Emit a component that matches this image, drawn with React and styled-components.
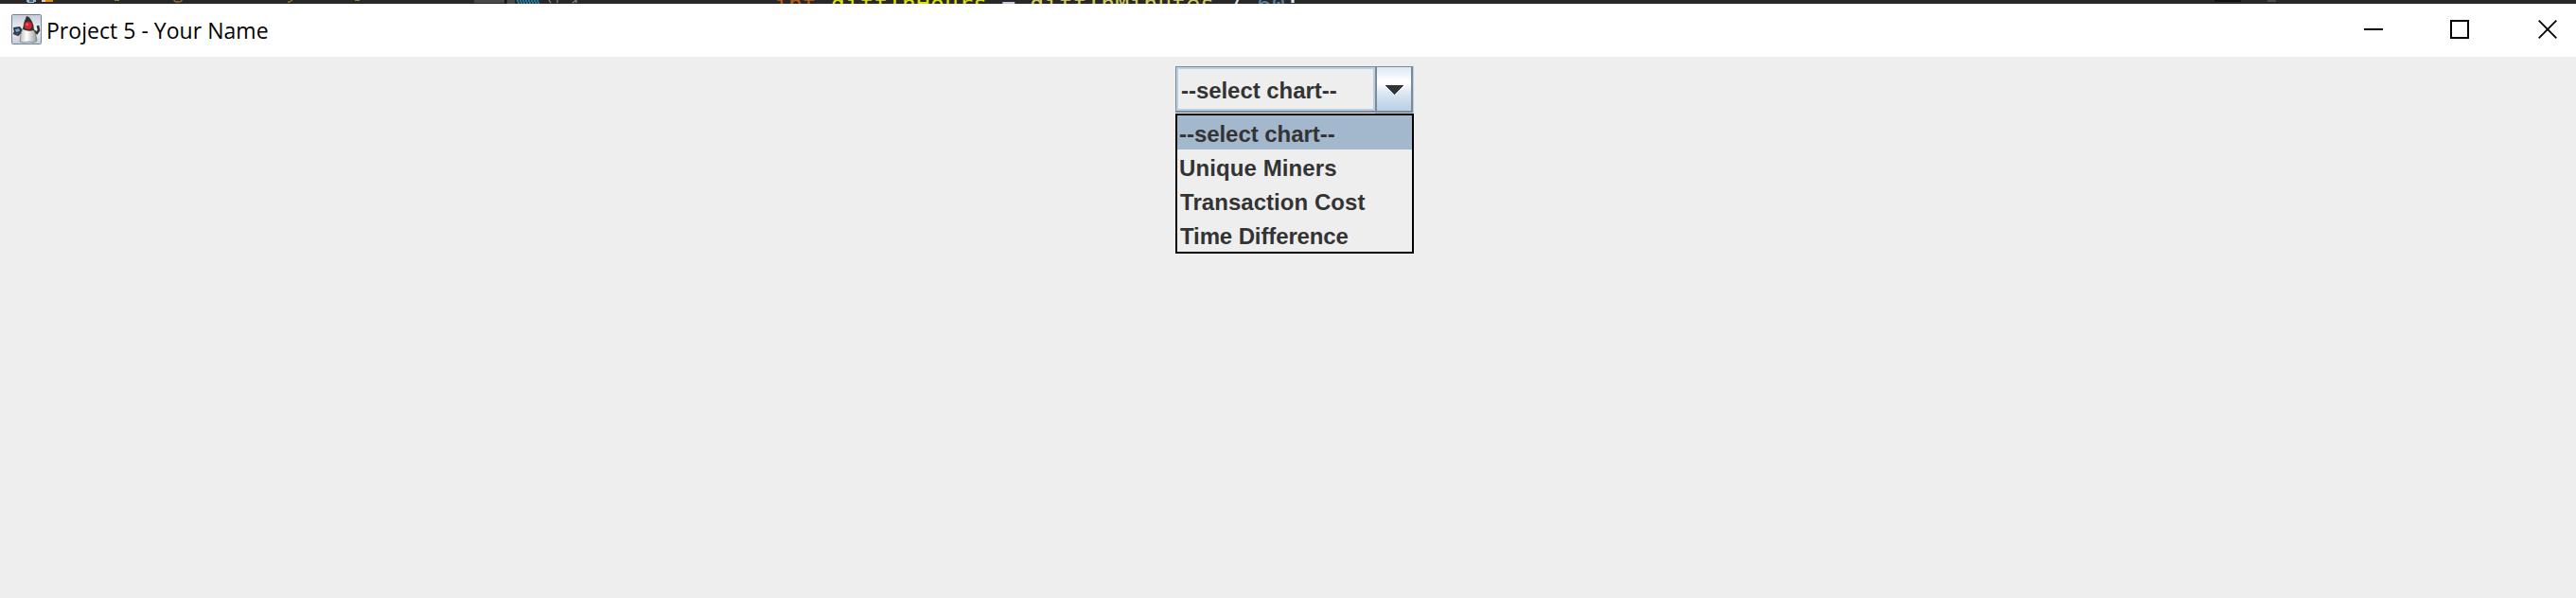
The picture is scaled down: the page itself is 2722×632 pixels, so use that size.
import React from "react";
import styled, { createGlobalStyle } from "styled-components";

const GlobalStyle = createGlobalStyle`
  * { box-sizing: border-box; }
  body { margin: 0; background: #eee; overflow: hidden; }
`;

const Screen = styled.div`
  display: flex;
  flex-direction: column;
  width: 2722px;
  height: 632px;
  background: #eee;
  font-family: "Liberation Sans", Arial, sans-serif;
`;

const EditorStrip = styled.div`
  display: flex;
  height: 4px;
  flex: none;
  overflow: hidden;
  background: #282828;
`;

const StripMarks = styled.svg`
  flex: none;
  display: block;
`;

const CodeLine = styled.pre`
  margin: -12px 0 0;
  height: 34px;
  line-height: 34px;
  flex: none;
  width: 1522px;
  font-family: "DejaVu Sans Mono", monospace;
  font-size: 24.8px;
  letter-spacing: 0.08px;
  color: #d9e8f7;
`;

const Token = styled.span`
  color: ${(p) => p.$color};
`;

const TitleBar = styled.header`
  display: flex;
  align-items: center;
  height: 56px;
  flex: none;
  padding: 0 20px 2px 12px;
  background: #fff;
`;

const Title = styled.h1`
  margin: 0 0 0 5px;
  padding-top: 2px;
  flex: 1;
  font: 400 23px/32px "Open Sans", "Noto Sans", sans-serif;
  letter-spacing: 0.03px;
  color: #000;
  white-space: nowrap;
`;

const Controls = styled.div`
  display: flex;
  gap: 71px;
`;

const ControlButton = styled.button`
  display: flex;
  width: 20px;
  height: 20px;
  padding: 0;
  border: 0;
  background: none;
  & + &:last-child { margin-left: 2px; }
`;

const Content = styled.main`
  display: flex;
  flex-direction: column;
  padding: 10px 0 0 1242px;
`;

const Combo = styled.div`
  display: flex;
  width: 252px;
  height: 50px;
  padding-bottom: 1px;
  background: linear-gradient(90deg, #eee 211px, #b8cfe5 211px);
`;

const ComboValue = styled.div`
  width: 211px;
  height: 49px;
  padding: 4px 0 0 5px;
  border: solid #7a8a99;
  border-width: 1px 0 2px 1px;
  box-shadow: inset 2px 2px #b8cfe5, inset -2px -2px #b8cfe5;
  font-size: 24px;
  font-weight: 700;
  line-height: 42px;
  letter-spacing: -0.05px;
  color: #333;
  white-space: nowrap;
`;

const ComboArrow = styled.button`
  display: flex;
  align-items: center;
  justify-content: center;
  width: 40px;
  height: 49px;
  padding: 2px 0 0;
  border: solid #7a8a99;
  border-width: 1px 2px 2px 2px;
  background: linear-gradient(#dde8f3 0%, #fff 32%, #fff 36%, #dde8f3 58%, #b8cfe5 100%);
`;

const Menu = styled.ul`
  margin: 0;
  padding: 0;
  width: 252px;
  border: 2px solid #000;
  background: #eee;
  list-style: none;
`;

const MenuItem = styled.li`
  height: 36px;
  padding: 3px 0 0 ${(p) => p.$indent}px;
  font-size: 24px;
  font-weight: 700;
  line-height: 34px;
  color: #333;
  white-space: nowrap;
  letter-spacing: ${(p) => p.$spacing}px;
  background: ${(p) => (p.$selected ? "#a3b8cc" : "#eee")};
`;

const options = [
  { label: "--select chart--", spacing: -0.05, indent: 2 },
  { label: "Unique Miners", spacing: 0.1, indent: 2 },
  { label: "Transaction Cost", spacing: 0.05, indent: 3 },
  { label: "Time Difference", spacing: -0.12, indent: 3 },
];

function MascotIcon() {
  return (
    <svg width="32" height="32" viewBox="0 0 32 32">
      <defs>
        <linearGradient id="tile" x2="0" y2="1">
          <stop stopColor="#c7cbd8" />
          <stop offset=".5" stopColor="#f2f2f6" />
          <stop offset="1" stopColor="#c9cad5" />
        </linearGradient>
        <linearGradient id="belly">
          <stop stopColor="#bbb" />
          <stop offset=".4" stopColor="#fff" />
          <stop offset="1" stopColor="#999" />
        </linearGradient>
      </defs>
      <rect x=".5" y=".5" width="31" height="31" rx="1" fill="url(#tile)" stroke="#68869d" />
      <path d="M2 14l7-1 3 4-3 4-6-1z" fill="#26384a" />
      <path d="M4 16l4-1 1 3-4 1z" fill="#78a9d6" />
      <path d="M2 20l5 2 3-3" fill="none" stroke="#493b32" strokeWidth="2" />
      <path d="M23 17l4 3 2-3-1-5" fill="none" stroke="#303030" strokeWidth="2.6" />
      <path d="M12 15Q9 21 9 29l4 1 5-1 6 1 3-2Q26 19 22 14z" fill="url(#belly)" stroke="#666" strokeWidth=".6" />
      <path d="M16 2Q19 2 22 8q2 4 2 9-6 2-12-1Q13 8 16 2z" fill="#30332f" />
      <circle cx="17.7" cy="12" r="4" fill="#d9222a" />
      <circle cx="16.7" cy="10.7" r="1.5" fill="#f05b58" />
    </svg>
  );
}

function EditorTop() {
  return (
    <EditorStrip>
      <StripMarks width="818" height="4" viewBox="0 0 818 4">
        <path d="M28 0h10v2h-2v1h-7V2h-1z" fill="#a9b3ba" />
        <path d="M31 0h4v2h-4z" fill="#22679c" />
        <path d="M44 0h8v2h-8z" fill="#ddd2bd" />
        <path d="M48 0h8v2h-8z" fill="#d98c20" />
        <path d="M121 0h5v1h-5zM375 0h5v1h-5z" fill="#957a40" />
        <path d="M184 0q0 2 4 2t4-2M304 2h2l3-2" fill="none" stroke="#8b713b" strokeWidth="1.4" />
        <path d="M501 0h32v3h-32zM536 0h8v4h-8z" fill="#484848" />
        <path d="M533 0h2v4h-2z" fill="#151515" />
        <path d="M546 1h24M547 3h24" stroke="#24779a" strokeWidth="2" strokeDasharray="2 1" />
        <path d="M580 0l2 3M589 0v3M605 3l4-3v3" fill="none" stroke="#71818b" strokeWidth="1.4" />
      </StripMarks>
      <CodeLine>
        <Token $color="#b85d18">int</Token>{" "}
        <Token $color="#dce000">diffInHours</Token>{" "}
        <Token $color="#c8c5e0">=</Token>{" "}
        <Token $color="#d3cc63">diffInMinutes</Token>{" "}/{" "}
        <Token $color="#557ea0">60</Token>;
      </CodeLine>
      <StripMarks width="382" height="4" viewBox="0 0 382 4">
        <path d="M0 0h28v2H0z" fill="#111" />
        <path d="M56 0h9v2h-9z" fill="#4b4b4b" />
      </StripMarks>
    </EditorStrip>
  );
}

export default function App() {
  return (
    <Screen>
      <GlobalStyle />
      <EditorTop />
      <TitleBar>
        <MascotIcon />
        <Title>Project 5 - Your Name</Title>
        <Controls>
          <ControlButton aria-label="Minimize">
            <svg width="20" height="20"><path d="M0 10h20" stroke="#000" strokeWidth="2" /></svg>
          </ControlButton>
          <ControlButton aria-label="Maximize">
            <svg width="20" height="20"><path d="M1 1h18v18H1z" fill="none" stroke="#000" strokeWidth="2" /></svg>
          </ControlButton>
          <ControlButton aria-label="Close">
            <svg width="20" height="20"><path d="M.7.7l18.6 18.6M19.3.7L.7 19.3" stroke="#000" strokeWidth="1.8" /></svg>
          </ControlButton>
        </Controls>
      </TitleBar>
      <Content>
        <Combo>
          <ComboValue>--select chart--</ComboValue>
          <ComboArrow aria-label="Open list">
            <svg width="20" height="10" shapeRendering="crispEdges"><path d="M0 0h20L10 10z" fill="#333" /></svg>
          </ComboArrow>
        </Combo>
        <Menu>
          {options.map((o, i) => (
            <MenuItem key={o.label} $selected={i === 0} $spacing={o.spacing} $indent={o.indent}>{o.label}</MenuItem>
          ))}
        </Menu>
      </Content>
    </Screen>
  );
}
